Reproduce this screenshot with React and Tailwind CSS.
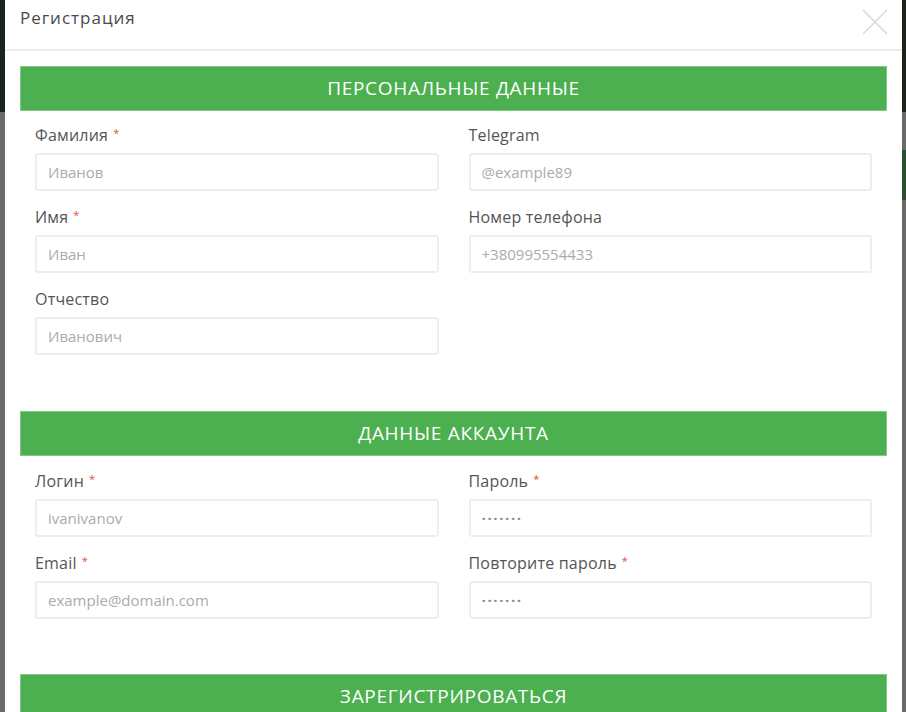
import React from 'react'

const font = { fontFamily: '"Open Sans", "Liberation Sans", sans-serif' }

function Field({ label, required, placeholder, dots }) {
  return (
    <div className="mb-[16px]">
      <label className="block h-[20px] text-[16px] leading-[20px] tracking-[0.2px] text-[#555]">
        {label}
        {required && <span className="ml-[5px] align-top text-[11px] leading-[16px] text-[#e84c3d]">*</span>}
      </label>
      <input
        type="text"
        placeholder={placeholder}
        className={
          dots
            ? 'mt-[8px] block h-[38px] w-full rounded-[3px] border-2 border-[#e9f1e9] bg-white px-[11px] text-[15px] font-bold text-[#555] outline-none placeholder:tracking-[1.6px] placeholder:text-[#8a8a8a]'
            : 'mt-[8px] block h-[38px] w-full rounded-[3px] border-2 border-[#e9f1e9] bg-white px-[11px] text-[15px] text-[#555] outline-none placeholder:text-[#ababab]'
        }
      />
    </div>
  )
}

function SectionBar({ children }) {
  return (
    <div className="flex h-[45px] items-center justify-center border border-[#84c887] bg-[#4caf50] text-[19px] uppercase tracking-[0.7px] text-white">
      {children}
    </div>
  )
}

export default function App() {
  return (
    <div className="relative h-[712px] w-[906px] overflow-hidden bg-[#6a6a6a]" style={font}>
      {/* page behind the overlay */}
      <div className="absolute inset-0">
        <div className="h-[112px] w-full bg-[#1b231d]" />
        <div className="ml-auto mt-[38px] h-[50px] w-[20px] bg-[#2c4f2e]" />
      </div>

      <div className="relative ml-[5px] h-full w-[897px] bg-white">
        {/* header */}
        <div className="flex h-[51px] items-start justify-between border-b-2 border-[#eeeeee] pl-[15px] pr-[14px]">
          <h4 className="pt-[7px] text-[17px] leading-[22px] tracking-[1px] text-[#4a4a4a]">Регистрация</h4>
          <button className="mt-[9px]" aria-label="close">
            <svg width="26" height="26" viewBox="0 0 26 26" fill="none" stroke="#d6d6d6" strokeWidth="1.4">
              <path d="M1 1 L25 25 M25 1 L1 25" />
            </svg>
          </button>
        </div>

        <div className="px-[15px] pt-[15px]">
          <SectionBar>Персональные данные</SectionBar>
          <div className="mt-[14px] grid grid-cols-2 gap-x-[30px] px-[15px]">
            <div>
              <Field label="Фамилия" required placeholder="Иванов" />
              <Field label="Имя" required placeholder="Иван" />
              <Field label="Отчество" placeholder="Иванович" />
            </div>
            <div>
              <Field label="Telegram" placeholder="@example89" />
              <Field label="Номер телефона" placeholder="+380995554433" />
            </div>
          </div>

          <div className="mt-[40px]">
            <SectionBar>Данные аккаунта</SectionBar>
          </div>
          <div className="mt-[15px] grid grid-cols-2 gap-x-[30px] px-[15px]">
            <div>
              <Field label="Логин" required placeholder="ivanivanov" />
              <Field label="Email" required placeholder="example@domain.com" />
            </div>
            <div>
              <Field label="Пароль" required placeholder="·······" dots />
              <Field label="Повторите пароль" required placeholder="·······" dots />
            </div>
          </div>

          <button className="mt-[39px] flex h-[45px] w-full items-center justify-center border border-[#84c887] bg-[#4caf50] text-[19px] uppercase tracking-[0.7px] text-white">
            Зарегистрироваться
          </button>
        </div>
      </div>
    </div>
  )
}
